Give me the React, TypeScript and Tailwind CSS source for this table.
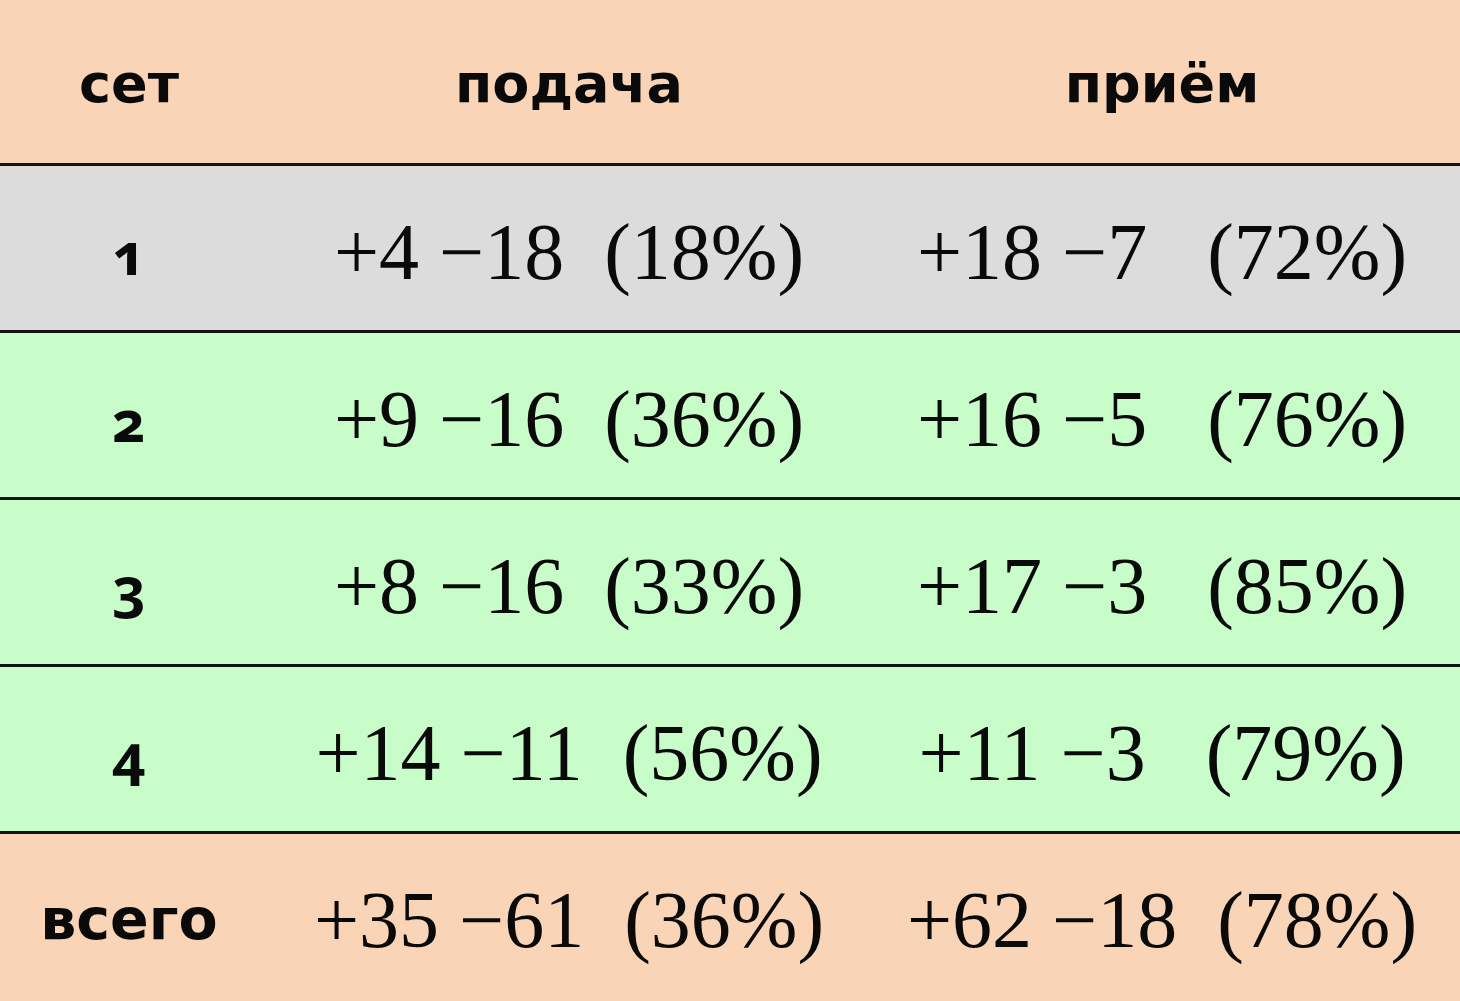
const rows = [
  { set: "1", serve: "+4 −18  (18%)", recv: "+18 −7   (72%)", bg: "bg-[#dcdcdc]" },
  { set: "2", serve: "+9 −16  (36%)", recv: "+16 −5   (76%)", bg: "bg-[#c8fcc8]" },
  { set: "3", serve: "+8 −16  (33%)", recv: "+17 −3   (85%)", bg: "bg-[#c8fcc8]" },
  { set: "4", serve: "+14 −11  (56%)", recv: "+11 −3   (79%)", bg: "bg-[#c8fcc8]" },
  { set: "всего", serve: "+35 −61  (36%)", recv: "+62 −18  (78%)", bg: "bg-[#f9d4b6]" },
];

function App() {
  return (
    <div className="w-[1460px] h-[1001px] overflow-hidden bg-[#f9d4b6] text-[#0a0a0a]">
      {/* header */}
      <div className="flex h-[163px] items-center font-['DejaVu_Sans',sans-serif] font-bold text-[54px] pt-[4px]">
        <div className="w-[258px] text-center">сет</div>
        <div className="w-[622px] text-center">подача</div>
        <div className="flex-1 text-center pr-[16px]">приём</div>
      </div>
      {rows.map((r) => (
        <div key={r.set} className={`flex h-[167px] items-center border-t-[3px] border-[#141414] pt-[8px] ${r.bg}`}>
          <div
            className={`w-[258px] text-center font-bold oldstyle-nums ${
              r.set === "всего" ? "font-['DejaVu_Sans',sans-serif] text-[57px]" : "font-['Noto_Sans',sans-serif] text-[58px]"
            }`}
          >
            {r.set}
          </div>
          <div className="w-[622px] text-center font-['Liberation_Serif',serif] text-[80px] whitespace-pre">
            {r.serve}
          </div>
          <div className="flex-1 text-center pr-[16px] font-['Liberation_Serif',serif] text-[80px] whitespace-pre">
            {r.recv}
          </div>
        </div>
      ))}
    </div>
  );
}

export default App;
